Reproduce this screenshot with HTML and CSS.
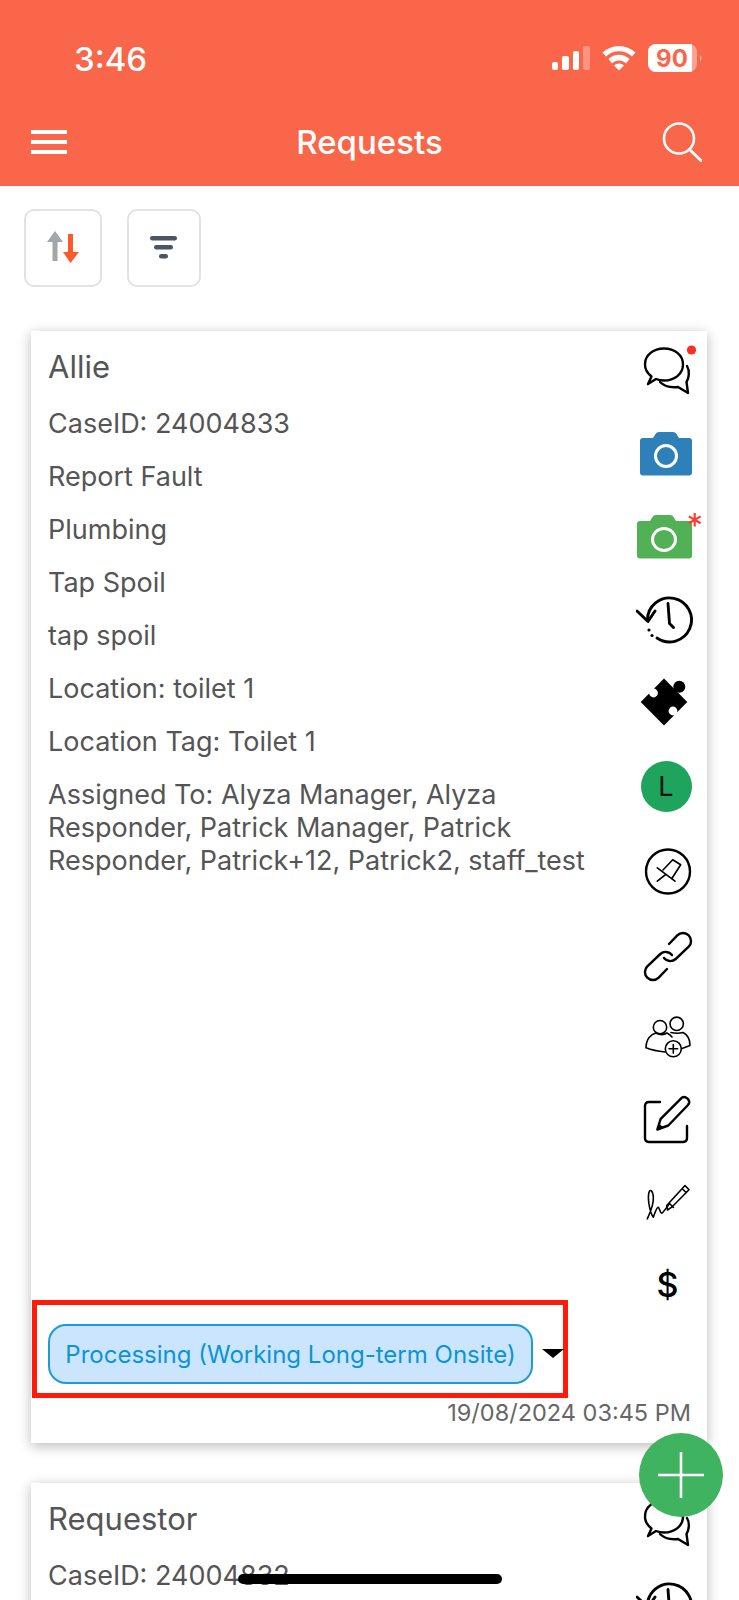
FILE: index.html
```html
<!DOCTYPE html>
<html lang="en">
<head>
<meta charset="utf-8">
<title>Requests</title>
<link rel="stylesheet" href="styles.css">
</head>
<body>
<div class="page">
  <header class="header">
    <div class="status-bar">
      <span class="time">3:46</span>
      <svg class="status-icons" viewBox="0 0 152 30" width="152" height="30">
        <rect x="0" y="18" width="6" height="8" rx="2" fill="#fff"/>
        <rect x="10" y="12" width="7" height="14" rx="2" fill="#fff"/>
        <rect x="21" y="7" width="6" height="19" rx="2" fill="#fff"/>
        <rect x="31" y="2" width="7" height="24" rx="2" fill="#fff" opacity=".3"/>
        <path d="M50.5 8.5 A24 24 0 0 1 83.5 8.5 L80 12.5 A19 19 0 0 0 54 12.5 Z" fill="#fff"/>
        <path d="M56.5 15 A15 15 0 0 1 77.5 15 L74 19.5 A9.5 9.5 0 0 0 60 19.5 Z" fill="#fff"/>
        <path d="M62 21.5 A7 7 0 0 1 72 21.5 L67 26.5 Z" fill="#fff"/>
        <rect x="96" y="0" width="49" height="28" rx="8" fill="#fff" opacity=".4"/>
        <path d="M104 0 H140 V28 H104 A8 8 0 0 1 96 20 V8 A8 8 0 0 1 104 0 Z" fill="#fff"/>
        <path d="M148 11 Q151 14 148 18 Z" fill="#fff" opacity=".5"/>
        <text class="battery-text" x="120" y="23" text-anchor="middle">90</text>
      </svg>
    </div>
    <nav class="nav">
      <div class="hamburger"><i></i><i></i><i></i></div>
      <h1 class="title">Requests</h1>
      <svg class="search" viewBox="0 0 40 40" width="40" height="40">
        <circle cx="17" cy="16.5" r="15" fill="none" stroke="#fff" stroke-width="2.6"/>
        <path d="M27.5 27.5 L39 38.5" stroke="#fff" stroke-width="3" stroke-linecap="round"/>
      </svg>
    </nav>
  </header>

  <div class="toolbar">
    <button class="tool tool-sort" type="button">
      <svg viewBox="0 0 34 34" width="34" height="34">
        <path d="M9 0 L17 11 H11.5 V30 H6.5 V11 H1 Z" fill="#A2A6A9"/>
        <path d="M22 3 H27 V21 H33 L24.5 32 L17 21 H22 Z" fill="#FB5A2B"/>
      </svg>
    </button>
    <button class="tool tool-filter" type="button">
      <svg viewBox="0 0 28 24" width="28" height="24">
        <rect x="0" y="0" width="27" height="4.4" rx="2.2" fill="#4B5563"/>
        <rect x="4" y="9" width="19" height="4.4" rx="2.2" fill="#4B5563"/>
        <rect x="9" y="18" width="9" height="4.4" rx="2.2" fill="#4B5563"/>
      </svg>
    </button>
  </div>

  <article class="card card-first">
    <div class="card-top">
      <div class="info">
        <h2 class="name">Allie</h2>
        <p class="line">CaseID: 24004833</p>
        <p class="line">Report Fault</p>
        <p class="line">Plumbing</p>
        <p class="line">Tap Spoil</p>
        <p class="line">tap spoil</p>
        <p class="line">Location: toilet 1</p>
        <p class="line">Location Tag: Toilet 1</p>
        <p class="line">Assigned To: Alyza Manager, Alyza Responder, Patrick Manager, Patrick Responder, Patrick+12, Patrick2, staff_test</p>
      </div>
      <div class="actions">
        <div class="slot"><svg class="ico" viewBox="0 0 66 60">
          <path class="s" d="M15.5 35.5 C11 32 9 28 9 23.5 C9 14 17.5 7.5 28 7.5 C38.5 7.5 47 14 47 23.5 C47 33 38.5 39.5 28 39.5 C25 39.5 22.5 39 20 38 L12 43 Z"/>
          <path class="s" d="M24 41 C28 45 34 47 42 46 L52 52 L50.5 41 C53 37 54 30 51 25"/>
          <circle cx="55.5" cy="9" r="4.6" fill="#FF2D20"/>
        </svg></div>
        <div class="slot"><svg class="ico" viewBox="0 0 66 60">
          <path d="M7 14 H17 L19.5 10 Q20.5 8 23 8 H37 Q39.5 8 40.5 10 L43 14 H53 Q56 14 56 17 V48.5 Q56 51.5 53 51.5 H7 Q4 51.5 4 48.5 V17 Q4 14 7 14Z" fill="#2E80B8"/>
          <circle cx="30" cy="32" r="10.5" fill="none" stroke="#fff" stroke-width="3"/>
        </svg></div>
        <div class="slot"><svg class="ico" viewBox="0 0 66 60">
          <path d="M4 14 H14 L16.5 10 Q17.5 8 20 8 H34 Q36.5 8 37.5 10 L40 14 H53 Q56 14 56 17 V48.5 Q56 51.5 53 51.5 H4 Q1 51.5 1 48.5 V17 Q1 14 4 14Z" fill="#53B155"/>
          <ellipse cx="28" cy="32.5" rx="11.5" ry="11" fill="none" stroke="#fff" stroke-width="3"/>
          <path d="M58.7 6 V19.6 M52.8 9.4 L64.6 16.2 M64.6 9.4 L52.8 16.2" stroke="#FF3B30" stroke-width="2.2" fill="none"/>
        </svg></div>
        <div class="slot"><svg class="ico" viewBox="0 0 66 60">
          <path class="s b" d="M11.5 30 A22 22 0 1 1 21 48"/>
          <path class="s b" d="M1 21 L12 31.5 L19 21"/>
          <path class="s b" d="M32 13.5 L33.5 33.5 L37.5 37.5"/>
          <circle cx="13" cy="40" r="1.6"/><circle cx="16" cy="45.5" r="1.6"/>
        </svg></div>
        <div class="slot"><svg class="ico" viewBox="0 0 66 60">
          <path d="M4.7 29 L28 5.5 L51.3 29 L28 52.5 Z"/>
          <circle cx="43.3" cy="13.7" r="6"/>
          <circle cx="17.5" cy="20" r="4.4" fill="#fff"/>
          <circle cx="37" cy="38" r="4.4" fill="#fff"/>
        </svg></div>
        <div class="slot"><div class="avatar">L</div></div>
        <div class="slot"><svg class="ico" viewBox="0 0 66 60">
          <g transform="translate(0 1.5)">
          <circle class="s" cx="32" cy="31" r="22"/>
          <path class="t" d="M21.3 27.3 L39 40.7 M27 29.5 L36.7 19.3 L44.7 24.3 L35.7 38.3 M29.7 34 L21.3 40.7"/>
          </g>
        </svg></div>
        <div class="slot"><svg class="ico" viewBox="0 0 66 60">
          <g transform="translate(0 2)">
          <path class="s" d="M36 31 A8 8 0 0 0 24.3 30 L11.3 42.3 A8 8 0 0 0 22.7 53.7 L31 45"/>
          <path class="s" d="M28 34 A8 8 0 0 0 39.7 35 L52.7 22.7 A8 8 0 0 0 41.3 11.3 L33 20"/>
          </g>
        </svg></div>
        <div class="slot"><svg class="ico" viewBox="0 0 66 60">
          <circle class="t" cx="40.7" cy="18.8" r="6.7"/>
          <circle class="t" cx="24" cy="22.2" r="6.7"/>
          <path class="t" d="M10 42.8 C10 34 15 29 20 28 C24 30 28 30 31 28 C33 29 34.5 30 36 32 M10 42.8 Q18 46 29 47"/>
          <path class="t" d="M35 27.5 Q41 29 47 27.5 C52 30 54 35 54 40.5 L46 43.5"/>
          <circle class="t" cx="37.3" cy="43.8" r="8"/>
          <path class="t" d="M33 43.8 H41.6 M37.3 39.5 V48.1"/>
        </svg></div>
        <div class="slot"><svg class="ico" viewBox="0 0 66 60">
          <path class="s" d="M24 14 H13 Q9 14 9 18 V50 Q9 54 13 54 H47 Q51 54 51 50 V38"/>
          <path class="s" d="M21.3 41.5 L24.7 30.8 L45.7 9.8 Q49 7.5 52 11 Q54.5 14 52 17 L32.3 37.5 Z"/>
          <path d="M21.3 41.5 L23 35.5 L27.5 39.5 Z"/>
        </svg></div>
        <div class="slot"><svg class="ico" viewBox="0 0 66 60">
          <path class="t" d="M11.3 47.8 C14 42 18 32 17.3 26.2 C17 20 14 17 12.8 22 C11.5 29 14 42 17.3 46.2 C19 42 20.5 36 22.3 36.2 C24 38 24 42 25.7 42.2 C27.5 41.5 29 38 32.3 34.5"/>
          <path class="t" d="M30.7 34.5 L31.5 39 L35.7 36.2 L53 18.8 L49 14.5 Z M33 32 L37.5 36.5 M46 17.5 L50 21.5"/>
        </svg></div>
        <div class="slot"><span class="dollar">$</span></div>
      </div>
    </div>
    <div class="status-row">
      <span class="chip">Processing (Working Long-term Onsite)</span>
      <span class="caret"></span>
    </div>
    <p class="date">19/08/2024 03:45 PM</p>
  </article>

  <article class="card">
    <div class="card-top">
      <div class="info">
        <h2 class="name">Requestor</h2>
        <p class="line">CaseID: 24004832</p>
      </div>
      <div class="actions">
        <div class="slot"><svg class="ico" viewBox="0 0 66 60">
          <path class="s" d="M15.5 35.5 C11 32 9 28 9 23.5 C9 14 17.5 7.5 28 7.5 C38.5 7.5 47 14 47 23.5 C47 33 38.5 39.5 28 39.5 C25 39.5 22.5 39 20 38 L12 43 Z"/>
          <path class="s" d="M24 41 C28 45 34 47 42 46 L52 52 L50.5 41 C53 37 54 30 51 25"/>
        </svg></div>
        <div class="slot"><svg class="ico" viewBox="0 0 66 60">
          <path class="s b" d="M11.5 30 A22 22 0 1 1 21 48"/>
          <path class="s b" d="M1 21 L12 31.5 L19 21"/>
          <path class="s b" d="M32 13.5 L33.5 33.5 L37.5 37.5"/>
        </svg></div>
      </div>
    </div>
  </article>

  <button class="fab" type="button" aria-label="Add">
    <svg viewBox="0 0 46 46" width="46" height="46"><path d="M23 0 V46 M0 23 H46" stroke="#fff" stroke-width="2.6"/></svg>
  </button>
  <div class="home-indicator"></div>
</div>
</body>
</html>
```

FILE: styles.css
```css
* { box-sizing: border-box; }
html, body { margin: 0; padding: 0; background: #fff; }
body { font-family: Inter, Roboto, "Liberation Sans", sans-serif; }

.page {
  position: relative;
  width: 739px;
  height: 1600px;
  overflow: hidden;
  background: #fff;
}

.header {
  height: 186px;
  background: #F9664A;
  color: #fff;
}
.status-bar {
  height: 118px;
  padding: 0 35px 0 74px;
  display: flex;
  align-items: center;
  justify-content: space-between;
}
.time { font-size: 33px; font-weight: 500; }
.status-icons { display: block; }
.battery-text { font: 700 24px Inter, sans-serif; fill: #F9664A; }

.nav {
  height: 48px;
  padding: 0 37px;
  display: grid;
  grid-template-columns: 1fr auto 1fr;
  align-items: center;
}
.hamburger { width: 36px; margin-left: -6px; display: flex; flex-direction: column; gap: 6px; }
.hamburger i { display: block; height: 4px; background: #fff; }
.title { margin: 0; font-size: 33px; font-weight: 500; line-height: 48px; }
.search { display: block; justify-self: end; }

.toolbar {
  display: flex;
  gap: 25px;
  padding: 23px 0 0 24px;
}
.tool {
  height: 78px;
  padding: 0;
  display: flex;
  align-items: center;
  justify-content: center;
  background: #fff;
  border: 2px solid #E1E2E6;
  border-radius: 10px;
}
.tool-sort { width: 78px; }
.tool-filter { width: 74px; }
.tool svg { display: block; }

.card {
  width: 676px;
  margin: 40px 0 0 31px;
  background: #fff;
  box-shadow: 0 3px 12px rgba(0, 0, 0, .28);
}
.card-first { margin-top: 44px; height: 1112px; }
.card-top { display: flex; height: 969px; }
.info { flex: 1; min-width: 0; padding: 16px 14px 0 17px; color: #555; }
.name { margin: 0 0 20px; font-size: 31px; font-weight: 400; line-height: 40px; }
.line { margin: 0 0 20px; font-size: 27px; line-height: 33px; }

.actions {
  width: 71px;
  flex: none;
  padding: 10px 5px 0 0;
  display: flex;
  flex-direction: column;
  gap: 23px;
}
.slot { flex: none; height: 60px; display: flex; align-items: center; justify-content: center; }
.ico { display: block; width: 66px; height: 60px; fill: #000; }
.s { fill: none; stroke: #000; stroke-width: 2.4; stroke-linecap: round; stroke-linejoin: round; }
.s.b { stroke-width: 2.9; }
.t { fill: none; stroke: #000; stroke-width: 1.6; stroke-linecap: round; stroke-linejoin: round; }
.avatar {
  width: 51px;
  height: 51px;
  margin-right: 6px;
  border-radius: 50%;
  background: #1EA45C;
  color: #111;
  font-size: 27px;
  line-height: 51px;
  text-align: center;
}
.dollar { font-size: 34px; font-weight: 500; color: #000; margin-right: 3px; }

.status-row {
  width: 536px;
  height: 98px;
  margin-left: 1px;
  padding: 19px 0 0 11px;
  display: flex;
  align-items: flex-start;
  border: 5px solid #FF1A0A;
}
.chip {
  flex: none;
  width: 485px;
  height: 60px;
  display: flex;
  align-items: center;
  justify-content: center;
  background: #CCE5FF;
  border: 2px solid #1E9AD6;
  border-radius: 18px;
  color: #0A94D6;
  font-size: 24px;
  white-space: nowrap;
}
.caret {
  width: 0;
  height: 0;
  margin: 25px 0 0 9px;
  border-left: 11px solid transparent;
  border-right: 11px solid transparent;
  border-top: 9px solid #000;
}
.date {
  margin: 0;
  padding: 0 16px 0 0;
  text-align: right;
  color: #666;
  font-size: 23.5px;
  line-height: 30px;
}

.fab {
  position: absolute;
  left: 639px;
  top: 1433px;
  width: 84px;
  height: 84px;
  padding: 0;
  display: flex;
  align-items: center;
  justify-content: center;
  background: #3FB35F;
  border: 0;
  border-radius: 50%;
}
.fab svg { display: block; }
.home-indicator {
  position: absolute;
  left: 238px;
  top: 1574px;
  width: 264px;
  height: 10px;
  border-radius: 5px;
  background: #000;
}
```
